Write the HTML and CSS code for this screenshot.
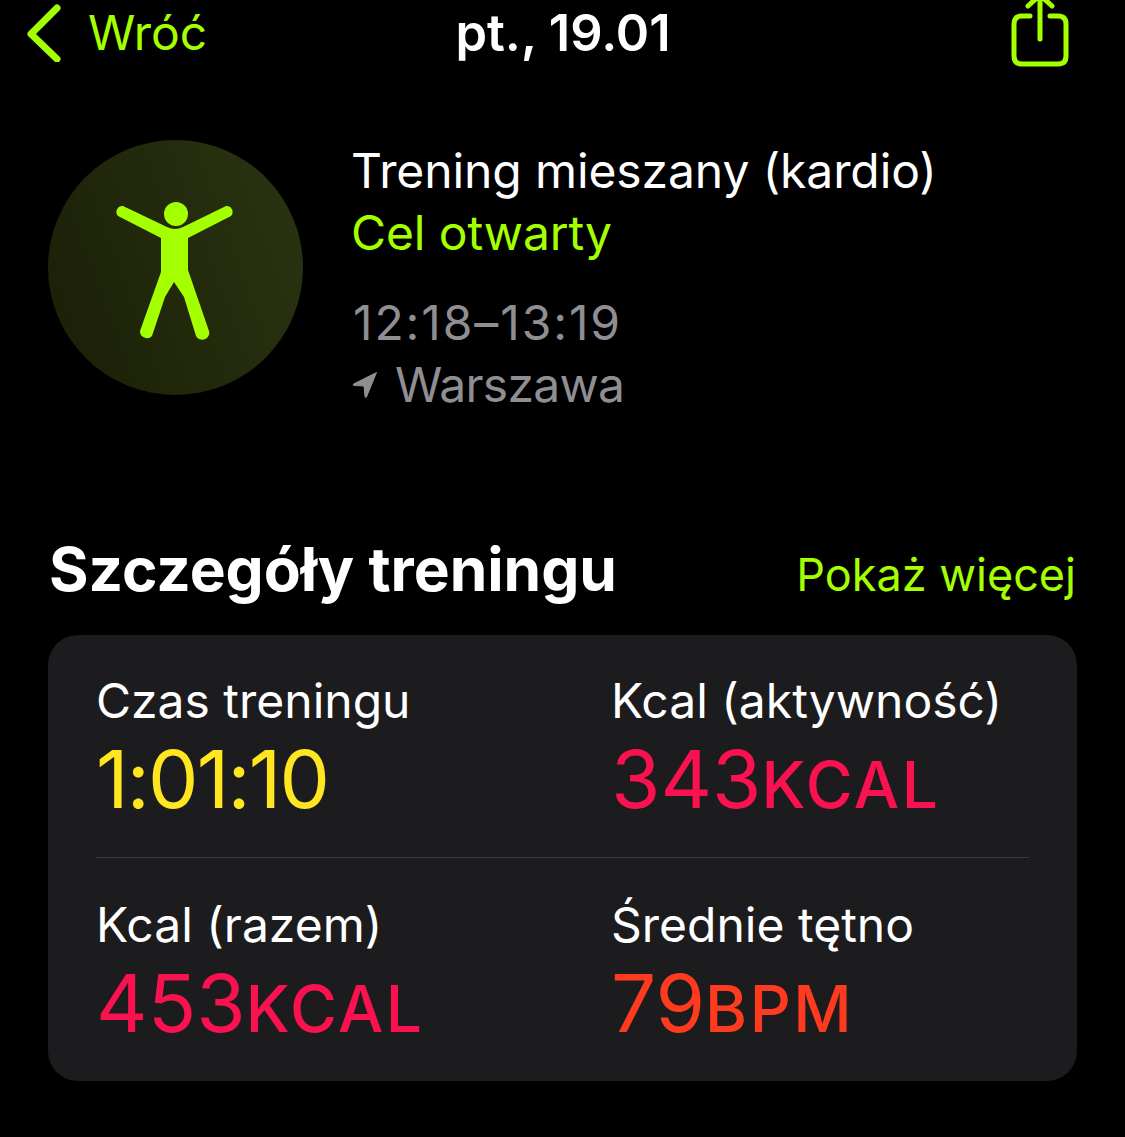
FILE: index.html
```html
<!DOCTYPE html>
<html lang="pl">

<head>
    <meta charset="UTF-8">
    <title>Trening</title>
    <link rel="stylesheet" href="styles.css">
</head>

<body>
    <div class="nav-bar">
        <div class="nav-back">
            <svg width="36" height="60" viewBox="0 0 36 60">
                <path d="M31 6 L5 32 L31 57" fill="none" stroke="#a4ff00" stroke-width="7" stroke-linecap="round" stroke-linejoin="round"/>
            </svg>
            <span>Wróć</span>
        </div>
        <div class="nav-title">pt., 19.01</div>
        <div class="nav-share">
            <svg width="60" height="68" viewBox="0 0 60 68">
                <path d="M20 16 H12 Q4 16 4 24 V56 Q4 64 12 64 H48 Q56 64 56 56 V24 Q56 16 48 16 H40" fill="none" stroke="#a4ff00" stroke-width="5" stroke-linecap="round"/>
                <path d="M30 39 V-2 M18 6 L30 -5 L42 6" fill="none" stroke="#a4ff00" stroke-width="5" stroke-linecap="round" stroke-linejoin="round"/>
            </svg>
        </div>
    </div>

    <div class="summary">
        <div class="activity-circle">
            <svg width="255" height="255" viewBox="48 140 255 255">
                <circle cx="176" cy="214" r="12" fill="#a4ff00"/>
                <path d="M167 227 Q175 231 183 227 L226 206 A6 6 0 0 1 231 216 L188 238 V270 L209 331 A7 7 0 0 1 196 336 L184 297 L174 282 L165 297 L152 336 A7 7 0 0 1 140 331 L161 272 V238 L118 216 A6 6 0 0 1 123 206 Z" fill="#a4ff00"/>
            </svg>
        </div>
        <div class="summary-text">
            <div class="workout-name">Trening mieszany (kardio)</div>
            <div class="workout-goal">Cel otwarty</div>
            <div class="workout-time">12:18–13:19</div>
            <div class="workout-place">
                <svg class="place-icon" width="26" height="28" viewBox="0 0 26 28">
                    <path d="M24.5 1.5 L1.5 13 Q0.5 14 2 14.5 L12 15 L13 25.5 Q13.5 27 14.5 26 Z" fill="#8e8e93" stroke="#8e8e93" stroke-linejoin="round"/>
                </svg>
                <span>Warszawa</span>
            </div>
        </div>
    </div>

    <div class="section-head">
        <div class="section-title">Szczegóły treningu</div>
        <div class="section-more">Pokaż więcej</div>
    </div>

    <div class="card">
        <div class="stat-row">
            <div class="stat">
                <div class="stat-label">Czas treningu</div>
                <div class="stat-value yellow">1:01:10</div>
            </div>
            <div class="stat">
                <div class="stat-label">Kcal (aktywność)</div>
                <div class="stat-value pink">343<span class="unit">KCAL</span></div>
            </div>
        </div>
        <div class="divider"></div>
        <div class="stat-row">
            <div class="stat">
                <div class="stat-label">Kcal (razem)</div>
                <div class="stat-value pink">453<span class="unit">KCAL</span></div>
            </div>
            <div class="stat">
                <div class="stat-label">Średnie tętno</div>
                <div class="stat-value red">79<span class="unit">BPM</span></div>
            </div>
        </div>
    </div>
</body>

</html>
```

FILE: styles.css
```css
html, body {
    height: 100%;
}

body {
    margin: 0;
    background-color: black;
    color: white;
    font-family: 'Inter', 'Roboto', sans-serif;
    overflow: hidden;
}

.nav-bar {
    display: flex;
    align-items: center;
    height: 64px;
    padding: 0 55px 0 26px;
}

.nav-back {
    flex: 1;
    display: flex;
    align-items: center;
    gap: 26px;
    color: #a4ff00;
    font-size: 48px;
}

.nav-title {
    font-size: 50.6px;
    font-weight: 600;
    margin-left: 30px;
}

.nav-share {
    flex: 1;
    display: flex;
    justify-content: flex-end;
    align-self: flex-start;
}

.summary {
    display: flex;
    gap: 48px;
    margin-top: 76px;
    padding-left: 48px;
}

.activity-circle {
    width: 255px;
    height: 255px;
    border-radius: 50%;
    background: linear-gradient(70deg, #1a1e06, #2a3511);
}

.activity-circle svg {
    display: block;
}

.summary-text {
    font-size: 48px;
    line-height: 62px;
    letter-spacing: -0.1px;
}

.workout-goal {
    color: #a4ff00;
}

.workout-time {
    margin-top: 28px;
    padding-left: 2px;
    color: #8e8e93;
    letter-spacing: 1.9px;
}

.workout-place {
    display: flex;
    align-items: center;
    gap: 17px;
    color: #8e8e93;
    letter-spacing: -0.7px;
}

.place-icon {
    margin-left: 1px;
}

.section-head {
    display: flex;
    align-items: baseline;
    justify-content: space-between;
    margin-top: 116px;
    padding: 0 49px;
}

.section-title {
    font-size: 60.4px;
    font-weight: 700;
}

.section-more {
    font-size: 45px;
    color: #a4ff00;
}

.card {
    margin: 29px 48px 0;
    padding: 36px 48px 27px;
    border-radius: 30px;
    background-color: #1c1c1e;
}

.stat-row {
    display: grid;
    grid-template-columns: 515px 1fr;
}

.stat-label {
    font-size: 48px;
    line-height: 60px;
}

.stat-value {
    margin-top: 3px;
    font-size: 80px;
    line-height: 90px;
}

.unit {
    font-size: 64px;
    font-weight: 500;
    letter-spacing: 2.5px;
}

.divider {
    height: 1px;
    margin: 27px 0 37px;
    background-color: #3a3a3c;
}

.yellow {
    color: #ffe620;
    letter-spacing: -1.8px;
}

.pink {
    color: #fa114f;
}

.red {
    color: #ff3b1f;
}
```
